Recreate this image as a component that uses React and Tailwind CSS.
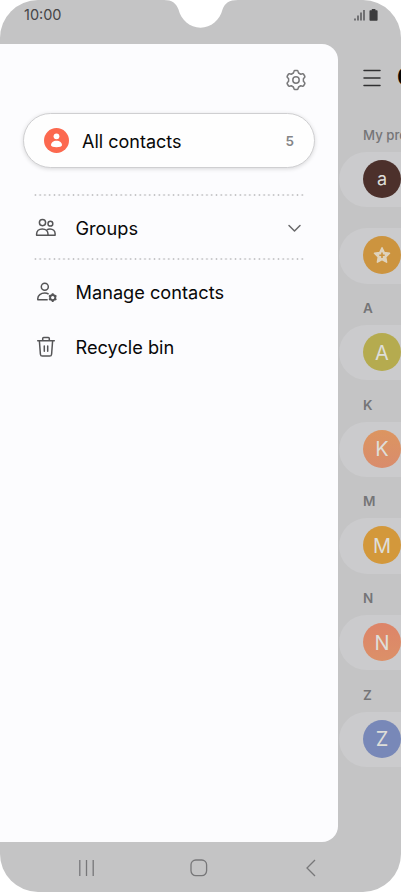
import React from 'react';

const contacts = [
  { letter: 'A', color: 'bg-[#b5ab4f]' },
  { letter: 'K', color: 'bg-linear-to-b from-[#dc9560] to-[#d98c6c]' },
  { letter: 'M', color: 'bg-[#d3983b]' },
  { letter: 'N', color: 'bg-linear-to-b from-[#dd8468] to-[#dc9068]' },
  { letter: 'Z', color: 'bg-[#7888b8]' },
];

const GroupsIcon = () => (
  <svg width="22" height="22" viewBox="0 0 22 22" fill="none" stroke="#555557" strokeWidth="1.5" strokeLinejoin="round">
    <circle cx="7.5" cy="5.6" r="3.1" />
    <circle cx="15.4" cy="6.7" r="2.4" />
    <path d="M1.6 18.2V17c0-3 2.300-5.100 5.700-5.100S13 14 13 17v1.200z" />
    <path d="M11.9 12.9c.8-.6 1.900-.9 3.100-.9 3 0 5.100 2 5.100 4.600v1.600H13" />
  </svg>
);

const ManageIcon = () => (
  <svg width="22" height="22" viewBox="0 0 22 22" fill="none" stroke="#555557" strokeWidth="1.5" strokeLinejoin="round">
    <circle cx="9.8" cy="5.7" r="3.5" />
    <path d="M13.6 13.2c-1-.7-2.300-1.100-3.800-1.100-4 0-7 2.400-7 5.500v1.200h9.900" />
    <circle cx="17.700" cy="16.600" r="2.600" strokeWidth="1.900" />
    <path d="M17.700 12.300v2M17.700 18.900v2M14 14.450l1.700 1M19.700 17.750l1.700 1M14 18.750l1.700-1M19.700 15.450l1.700-1" strokeWidth="1.900" />
  </svg>
);

const TrashIcon = () => (
  <svg width="22" height="22" viewBox="0 0 22 22" fill="none" stroke="#555557" strokeWidth="1.5" strokeLinecap="round" strokeLinejoin="round">
    <path d="M2.700 4.800h16.600M7.700 4.600V2.500c0-.6.400-1 1-1h4.600c.6 0 1 .4 1 1v2.100" />
    <path d="M4.400 5l1 13.200c.1 1.100.9 1.900 2 1.900h7.200c1.100 0 1.900-.8 2-1.900l1-13.200M9.300 10v5.200M12.700 10v5.200" />
  </svg>
);

const Divider = () => (
  <div className="ml-[33px] h-[2px] w-[272px] bg-[radial-gradient(circle,#c4c4c6_0.7px,transparent_1.2px)] bg-[length:4.770px_2px]" />
);

const MenuRow = ({ icon, label, className, children }) => (
  <div className={`flex items-center pl-[35px] pr-[36px] ${className}`}>
    {icon}
    <span className="ml-[18.500px] flex-1 text-[18.200px] leading-6 whitespace-nowrap">{label}</span>
    {children}
  </div>
);

const Drawer = () => (
  <aside className="h-[798px] w-[338px] shrink-0 rounded-r-[16px] bg-[#fcfcfe]">
    <div className="flex h-[69px] justify-end pr-[31px] pt-[24.500px]">
      <svg width="22" height="22" viewBox="0 0 22 22" fill="none" stroke="#78787a" strokeWidth="1.500" strokeLinejoin="round">
        <path d="M9.9 1.6h2.200Q12.800 1.600 13 2.300L13.600 4l2.200 1.250 1.800-.4q.7-.1 1 .4l1.200 2q.3.600-.1 1.100L18.400 9.750v2.500l1.300 1.400q.4.500.1 1.100l-1.200 2q-.3.500-1 .4l-1.800-.4L13.600 18l-.6 1.700q-.2.700-.9.700H9.900q-.7 0-.9-.7L8.400 18l-2.200-1.250-1.800.4q-.7.100-1-.4l-1.200-2q-.3-.6.100-1.100l1.300-1.400v-2.500L2.300 8.350q-.4-.5-.1-1.100l1.200-2q.3-.5 1-.4l1.800.4L8.400 4 9 2.300q.2-.7.900-.7z" />
        <circle cx="11" cy="11" r="3.200" />
      </svg>
    </div>
    <div className="ml-[23px] flex h-[55px] w-[292px] items-center rounded-full border border-[#cfcfd1] bg-[#fefefe] pl-5 pr-5 shadow-[0_1px_4px_rgba(0,0,0,0.15)]">
      <svg width="25" height="25" viewBox="0 0 25 25">
        <circle cx="12.500" cy="12.500" r="12.500" fill="#fc694f" />
        <circle cx="12.500" cy="8.300" r="2.900" fill="#fff" />
        <path d="M7 17.300c0-2.800 2.200-4.600 5.500-4.600s5.500 1.800 5.500 4.600c0 1.300-2.500 2-5.500 2s-5.500-.7-5.500-2z" fill="#fff" />
      </svg>
      <span className="ml-[13px] flex-1 pt-[2px] text-[18px] leading-6">All contacts</span>
      <span className="pt-px text-[13.500px] font-semibold text-[#858587]">5</span>
    </div>
    <div className="h-[26px]" />
    <Divider />
    <MenuRow icon={<GroupsIcon />} label="Groups" className="h-[62px] pt-[2px]">
      <svg width="15" height="9" viewBox="0 0 15 9" fill="none" stroke="#68686a" strokeWidth="1.500" strokeLinecap="round" strokeLinejoin="round">
        <path d="M2 1.500l5.500 5.500L13 1.500" />
      </svg>
    </MenuRow>
    <Divider />
    <MenuRow icon={<ManageIcon />} label="Manage contacts" className="h-[64px]" />
    <MenuRow icon={<TrashIcon />} label="Recycle bin" className="h-[46px]" />
  </aside>
);

const ContactCard = ({ color, children }) => (
  <div className="flex h-[55.300px] w-[120px] items-center rounded-l-full bg-[#cbcbcd] pb-[1px] pl-6">
    <div className={`flex size-[38px] shrink-0 items-center justify-center rounded-full text-[#deded9] ${color}`}>{children}</div>
  </div>
);

const ContactList = () => (
  <main className="w-[63px] shrink-0 overflow-hidden pl-px">
    <div className="flex h-[67px] w-[200px] items-center gap-[16px] pl-6">
      <svg width="18" height="18" viewBox="0 0 18 18" stroke="#303032" strokeWidth="1.500" strokeLinecap="round" className="shrink-0">
        <path d="M1 1.500h16M1 9h16M1 16.500h16" />
      </svg>
      <span className="text-[25px] leading-none font-bold">Contacts</span>
    </div>
    <div className="flex h-[41px] items-center pt-[9px] pl-6 text-[13.200px] font-medium whitespace-nowrap text-[#757577]">My profile</div>
    <ContactCard color="bg-[#4c302b]">
      <span className="text-[18px] leading-none">a</span>
    </ContactCard>
    <div className="h-[21px]" />
    <ContactCard color="bg-[#cc943f]">
      <svg width="20" height="20" viewBox="0 0 20 20">
        <path d="M10 2.800l2.300 4.800 5.200.7-3.800 3.700.9 5.200-4.600-2.500-4.600 2.500.9-5.200-3.800-3.700 5.200-.7z" fill="#dfd3bd" stroke="#dfd3bd" strokeWidth="1.500" strokeLinejoin="round" />
        <path d="M10 7.500v5.400M7.300 10.200h5.400" stroke="#cc943f" strokeWidth="1.600" />
      </svg>
    </ContactCard>
    {contacts.map(({ letter, color }) => (
      <div key={letter}>
        <div className="flex h-[41.350px] items-center pt-[8px] pl-6 text-[13.500px] font-semibold text-[#757577]">{letter}</div>
        <ContactCard color={color}>
          <span className="pt-px text-[20px] leading-none">{letter}</span>
        </ContactCard>
      </div>
    ))}
  </main>
);

export default function App() {
  return (
    <div className="h-[892px] w-[401px] overflow-hidden bg-white font-['Inter','Liberation_Sans',sans-serif] text-[#080808]">
      <div className="relative flex h-full flex-col overflow-hidden rounded-[38px] bg-[#c4c4c5]">
        <header className="flex h-[44px] shrink-0 items-start justify-between pl-6 pr-[22.500px]">
          <span className="pt-[5px] text-[14.500px] leading-5 text-[#454547]">10:00</span>
          <svg width="26" height="14" viewBox="0 0 26 14" className="mt-[8px]">
            <path d="M2 10.500v2M5 7.500v5M8 4.500v8M11 2v10.500" stroke="#454547" strokeWidth="1.300" />
            <path d="M17.300 2.300h1.500V1h3.600v1.300h1.400c.5 0 .8.300.8.800v8.600c0 .6-.4 1-1 1h-6.100c-.6 0-1-.4-1-1V3.100c0-.5.300-.8.800-.8z" fill="#3b3b3d" />
          </svg>
        </header>
        {/* camera notch */}
        <svg width="74" height="28" viewBox="0 0 74 28" className="absolute top-0 left-[164px]">
          <path d="M0 0C8 0 12 3 14.500 9.500C17 20 26 27.700 36.500 27.700S56 20 58.500 9.500C61 3 65 0 74 0z" fill="#fff" />
        </svg>
        <div className="flex h-[798px] shrink-0">
          <Drawer />
          <ContactList />
        </div>
        <nav className="flex flex-1 items-center pt-px pl-[78px]">
          <svg width="18" height="18" viewBox="0 0 18 18" stroke="#777779" strokeWidth="1.300">
            <path d="M1.800 1v16M8.500 1v16M15.200 1v16" />
          </svg>
          <svg width="18" height="18" viewBox="0 0 18 18" fill="none" stroke="#777779" strokeWidth="1.300" className="ml-[94px]">
            <rect x="1" y="1" width="15.600" height="15.600" rx="4.800" />
          </svg>
          <svg width="12" height="18" viewBox="0 0 12 18" fill="none" stroke="#777779" strokeWidth="1.300" className="ml-[97px]">
            <path d="M10 1L2 9l8 8" />
          </svg>
        </nav>
      </div>
    </div>
  );
}
